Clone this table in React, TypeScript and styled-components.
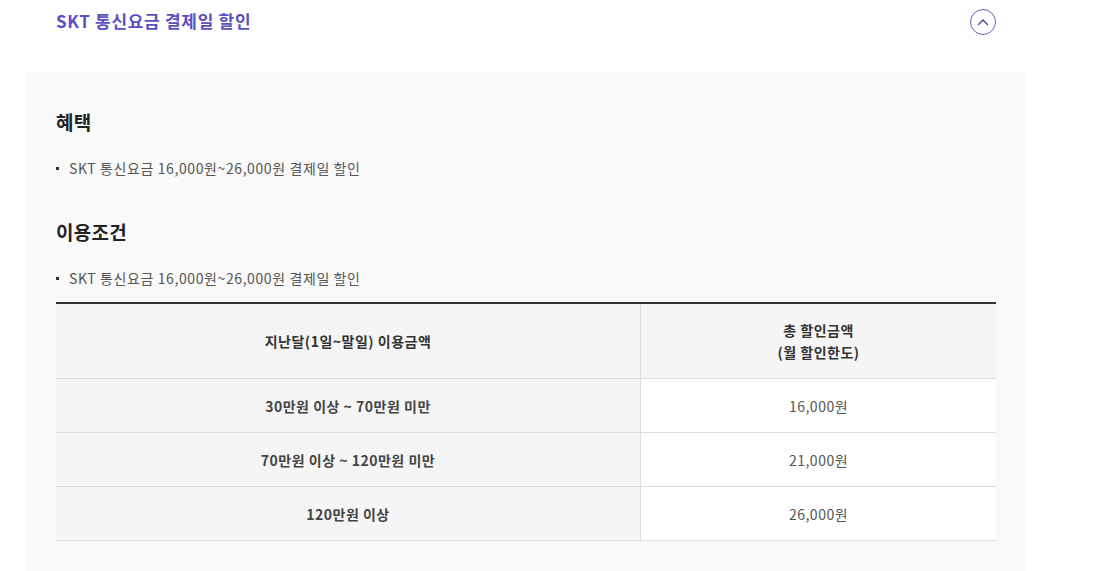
import React from 'react'
import styled, { createGlobalStyle } from 'styled-components'

interface Tier {
  range: string
  amount: string
}

const tiers: Tier[] = [
  { range: '30만원 이상 ~ 70만원 미만', amount: '16,000원' },
  { range: '70만원 이상 ~ 120만원 미만', amount: '21,000원' },
  { range: '120만원 이상', amount: '26,000원' },
]

const GlobalStyle = createGlobalStyle`
  body {
    margin: 0;
    background: #fff;
    font-family: 'Noto Sans CJK KR', 'Noto Sans', Roboto, sans-serif;
    color: #333;
  }
`

const App: React.FC = () => (
  <>
    <GlobalStyle />
    <Page>
      <Header>
        <Title>SKT 통신요금 결제일 할인</Title>
        <ToggleButton aria-label="접기">
          <svg width="12" height="8" viewBox="0 0 12 8" fill="none">
            <path d="M1.5 6.5L6 2l4.5 4.5" stroke="#4a3f8f" strokeWidth="1.4" strokeLinecap="round" />
          </svg>
        </ToggleButton>
      </Header>
      <Panel>
        <Section>
          <SectionTitle>혜택</SectionTitle>
          <Bullets>
            <li>SKT 통신요금 16,000원~26,000원 결제일 할인</li>
          </Bullets>
        </Section>
        <Section>
          <SectionTitle>이용조건</SectionTitle>
          <Bullets>
            <li>SKT 통신요금 16,000원~26,000원 결제일 할인</li>
          </Bullets>
          <Table>
            <thead>
              <tr>
                <HeadCell>지난달(1일~말일) 이용금액</HeadCell>
                <HeadCell>
                  총 할인금액
                  <br />
                  (월 할인한도)
                </HeadCell>
              </tr>
            </thead>
            <tbody>
              {tiers.map((t) => (
                <tr key={t.range}>
                  <RangeCell>{t.range}</RangeCell>
                  <AmountCell>{t.amount}</AmountCell>
                </tr>
              ))}
            </tbody>
          </Table>
        </Section>
      </Panel>
    </Page>
  </>
)

const Page = styled.div`
  width: 1100px;
  height: 571px;
  overflow: hidden;
`

const Header = styled.div`
  display: flex;
  align-items: center;
  justify-content: space-between;
  width: 940px;
  height: 44px;
  margin-left: 56px;
`

const Title = styled.h3`
  margin: 0;
  margin-top: -4px;
  font-size: 17px;
  font-weight: 700;
  color: #5b4fbf;
  letter-spacing: 0.7px;
`

const ToggleButton = styled.button`
  display: flex;
  align-items: center;
  justify-content: center;
  width: 26px;
  height: 26px;
  padding: 0;
  border: 1px solid #6b5fb8;
  border-radius: 50%;
  background: #fff;
  cursor: pointer;
`

const Panel = styled.div`
  width: 999px;
  margin: 28px 0 0 26px;
  padding: 36px 30px 40px;
  box-sizing: border-box;
  background: #f9f9f9;
`

const Section = styled.section`
  & + & {
    margin-top: 40px;
  }
`

const SectionTitle = styled.h4`
  margin: 0;
  font-size: 19px;
  font-weight: 700;
  color: #222;
  line-height: 28px;
  letter-spacing: 0.3px;
`

const Bullets = styled.ul`
  list-style: none;
  margin: 22px 0 0;
  padding: 0;

  li {
    position: relative;
    padding-left: 13px;
    font-size: 14px;
    line-height: 20px;
    color: #555;
    letter-spacing: 0.6px;
  }

  li::before {
    content: '';
    position: absolute;
    left: 0;
    top: 9px;
    width: 3px;
    height: 3px;
    background: #333;
  }
`

const Table = styled.table`
  width: 940px;
  margin-top: 14px;
  border-collapse: collapse;
  border-top: 2px solid #333;
  font-size: 14px;
  text-align: center;
  letter-spacing: 0.5px;

  td,
  th {
    border-bottom: 1px solid #ddd;
    padding: 0;
  }
`

const HeadCell = styled.th`
  height: 74px;
  width: 584px;
  background: #f5f5f5;
  font-weight: 700;
  color: #333;
  line-height: 22px;

  & + & {
    width: auto;
    border-left: 1px solid #ddd;
  }
`

const RangeCell = styled.td`
  height: 53px;
  background: #f5f5f5;
  font-weight: 700;
  color: #444;
`

const AmountCell = styled.td`
  background: #fff;
  border-left: 1px solid #ddd;
  color: #555;
`

export default App
